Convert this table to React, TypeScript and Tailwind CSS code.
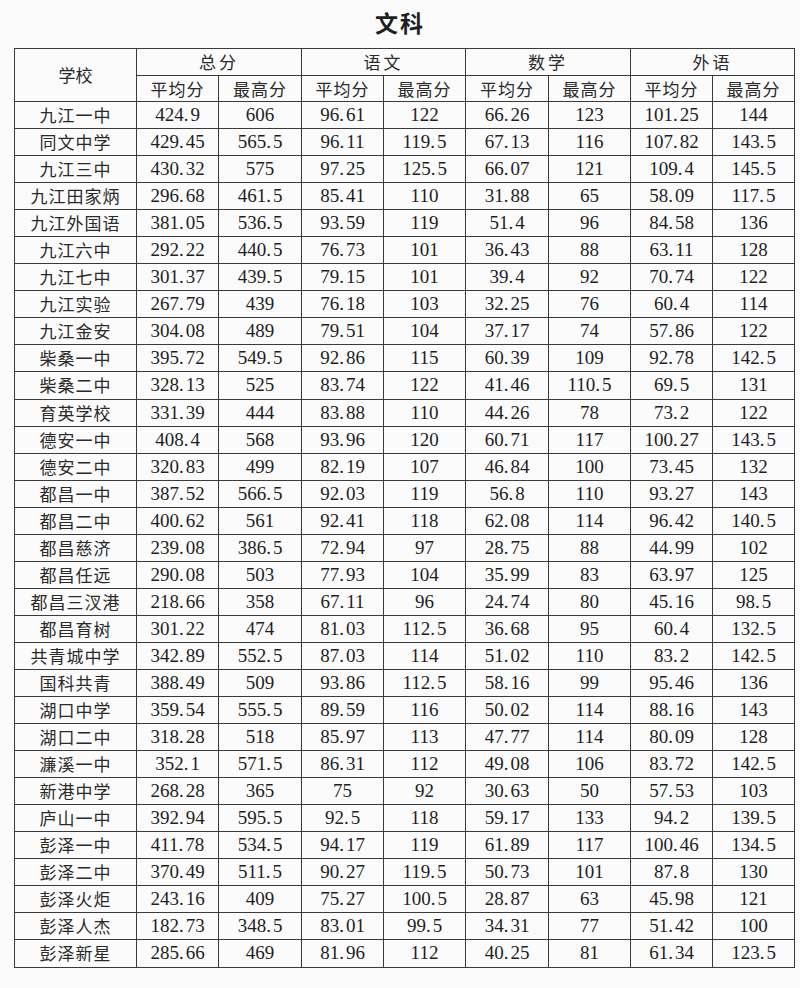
const rows: string[][] = [
  ["九江一中", "424.9", "606", "96.61", "122", "66.26", "123", "101.25", "144"],
  ["同文中学", "429.45", "565.5", "96.11", "119.5", "67.13", "116", "107.82", "143.5"],
  ["九江三中", "430.32", "575", "97.25", "125.5", "66.07", "121", "109.4", "145.5"],
  ["九江田家炳", "296.68", "461.5", "85.41", "110", "31.88", "65", "58.09", "117.5"],
  ["九江外国语", "381.05", "536.5", "93.59", "119", "51.4", "96", "84.58", "136"],
  ["九江六中", "292.22", "440.5", "76.73", "101", "36.43", "88", "63.11", "128"],
  ["九江七中", "301.37", "439.5", "79.15", "101", "39.4", "92", "70.74", "122"],
  ["九江实验", "267.79", "439", "76.18", "103", "32.25", "76", "60.4", "114"],
  ["九江金安", "304.08", "489", "79.51", "104", "37.17", "74", "57.86", "122"],
  ["柴桑一中", "395.72", "549.5", "92.86", "115", "60.39", "109", "92.78", "142.5"],
  ["柴桑二中", "328.13", "525", "83.74", "122", "41.46", "110.5", "69.5", "131"],
  ["育英学校", "331.39", "444", "83.88", "110", "44.26", "78", "73.2", "122"],
  ["德安一中", "408.4", "568", "93.96", "120", "60.71", "117", "100.27", "143.5"],
  ["德安二中", "320.83", "499", "82.19", "107", "46.84", "100", "73.45", "132"],
  ["都昌一中", "387.52", "566.5", "92.03", "119", "56.8", "110", "93.27", "143"],
  ["都昌二中", "400.62", "561", "92.41", "118", "62.08", "114", "96.42", "140.5"],
  ["都昌慈济", "239.08", "386.5", "72.94", "97", "28.75", "88", "44.99", "102"],
  ["都昌任远", "290.08", "503", "77.93", "104", "35.99", "83", "63.97", "125"],
  ["都昌三汊港", "218.66", "358", "67.11", "96", "24.74", "80", "45.16", "98.5"],
  ["都昌育树", "301.22", "474", "81.03", "112.5", "36.68", "95", "60.4", "132.5"],
  ["共青城中学", "342.89", "552.5", "87.03", "114", "51.02", "110", "83.2", "142.5"],
  ["国科共青", "388.49", "509", "93.86", "112.5", "58.16", "99", "95.46", "136"],
  ["湖口中学", "359.54", "555.5", "89.59", "116", "50.02", "114", "88.16", "143"],
  ["湖口二中", "318.28", "518", "85.97", "113", "47.77", "114", "80.09", "128"],
  ["濂溪一中", "352.1", "571.5", "86.31", "112", "49.08", "106", "83.72", "142.5"],
  ["新港中学", "268.28", "365", "75", "92", "30.63", "50", "57.53", "103"],
  ["庐山一中", "392.94", "595.5", "92.5", "118", "59.17", "133", "94.2", "139.5"],
  ["彭泽一中", "411.78", "534.5", "94.17", "119", "61.89", "117", "100.46", "134.5"],
  ["彭泽二中", "370.49", "511.5", "90.27", "119.5", "50.73", "101", "87.8", "130"],
  ["彭泽火炬", "243.16", "409", "75.27", "100.5", "28.87", "63", "45.98", "121"],
  ["彭泽人杰", "182.73", "348.5", "83.01", "99.5", "34.31", "77", "51.42", "100"],
  ["彭泽新星", "285.66", "469", "81.96", "112", "40.25", "81", "61.34", "123.5"],
];

const subjects = ["总分", "语文", "数学", "外语"];

// numbers in the scan use a wide full-stop, so pad it a little
function Num({ v }: { v: string }) {
  const [a, b] = v.split(".");
  if (b === undefined) return <>{a}</>;
  return (
    <>
      {a}.<span className="ml-[2px]">{b}</span>
    </>
  );
}

const cell = "border-[1.5px] border-[#3a3a3a] text-center p-0";

export default function App() {
  return (
    <div
      className="w-[800px] h-[988px] bg-[#fbfbfb] text-[#1e1e1e] overflow-hidden"
      style={{ fontFamily: '"Liberation Serif", "Noto Sans CJK SC", serif' }}
    >
      <h1 className="h-[48px] pt-[6px] text-center text-[23px] font-bold leading-[32px] tracking-[2px] font-['Noto_Sans_CJK_SC',sans-serif]">
        文科
      </h1>
      <table className="ml-[14px] w-[780px] border-collapse table-fixed text-[19px]">
        <colgroup>
          <col className="w-[122px]" />
          <col className="w-[82px]" />
          <col className="w-[83px]" />
          <col className="w-[82px]" />
          <col className="w-[82px]" />
          <col className="w-[83px]" />
          <col className="w-[82px]" />
          <col className="w-[82px]" />
          <col className="w-[82px]" />
        </colgroup>
        <thead className="font-['Noto_Sans_CJK_SC',sans-serif] text-[17px] text-[#2a2a2a]">
          <tr className="h-[27px]">
            <th rowSpan={2} className={`${cell} font-normal`}>
              学校
            </th>
            {subjects.map((s) => (
              <th key={s} colSpan={2} className={`${cell} font-normal leading-[24px] tracking-[3px]`}>
                {s}
              </th>
            ))}
          </tr>
          <tr className="h-[26px]">
            {subjects.map((s) => (
              <>
                <th key={s + "a"} className={`${cell} font-normal leading-[24px] tracking-[1px]`}>
                  平均分
                </th>
                <th key={s + "b"} className={`${cell} font-normal leading-[24px] tracking-[1px]`}>
                  最高分
                </th>
              </>
            ))}
          </tr>
        </thead>
        <tbody>
          {rows.map((r) => (
            <tr key={r[0]} className="h-[27.06px]">
              <td className={`${cell} font-['Noto_Sans_CJK_SC',sans-serif] text-[17px] leading-[24px] tracking-[1px] text-[#2a2a2a]`}>
                {r[0]}
              </td>
              {r.slice(1).map((v, i) => (
                <td key={i} className={`${cell} leading-[24px]`}>
                  <Num v={v} />
                </td>
              ))}
            </tr>
          ))}
        </tbody>
      </table>
    </div>
  );
}
